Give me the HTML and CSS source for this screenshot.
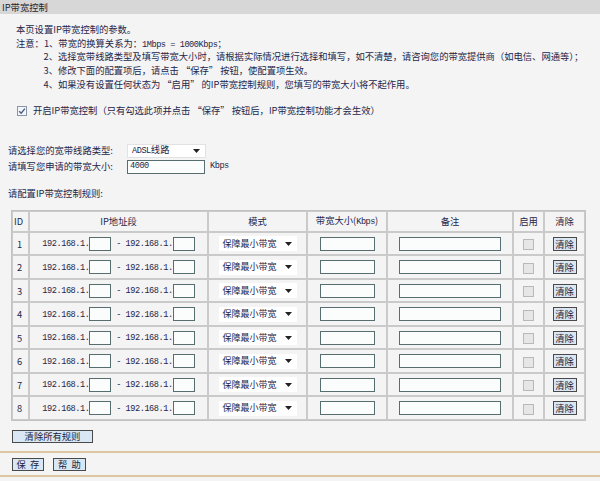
FILE: index.html
```html
<!DOCTYPE html>
<html lang="zh-CN">
<head>
<meta charset="utf-8">
<title>IP带宽控制</title>
<link rel="stylesheet" href="styles.css">
</head>
<body>
<div class="titlebar">IP带宽控制</div>
<div class="notes">
  <p>本页设置IP带宽控制的参数。</p>
  <p>注意：1、带宽的换算关系为：<span class="m">1Mbps = 1000Kbps</span>；</p>
  <p class="ind">2、选择宽带线路类型及填写带宽大小时，请根据实际情况进行选择和填写，如不清楚，请咨询您的带宽提供商（如电信、网通等）；</p>
  <p class="ind">3、修改下面的配置项后，请点击 “保存” 按钮，使配置项生效。</p>
  <p class="ind">4、如果没有设置任何状态为 “启用” 的IP带宽控制规则，您填写的带宽大小将不起作用。</p>
</div>
<div class="enable">
  <span class="cb checked"><svg width="10" height="10" viewBox="0 0 10 10"><path d="M2.2 5.2 L4.2 7.3 L7.9 2.6" fill="none" stroke="#4a5f86" stroke-width="1.4"/></svg></span>
  <span>开启IP带宽控制（只有勾选此项并点击 “保存” 按钮后，IP带宽控制功能才会生效）</span>
</div>
<div class="form">
  <div class="frow">
    <span class="flabel">请选择您的宽带线路类型:</span>
    <span class="sel sel-line"><span><span class="m">ADSL</span>线路</span><svg width="7" height="4" viewBox="0 0 7 4"><path d="M0 0h7L3.5 4z" fill="#222"/></svg></span>
  </div>
  <div class="frow">
    <span class="flabel">请填写您申请的带宽大小:</span>
    <span class="inp inp-bw"><span class="m">4000</span></span>
    <span class="m unit">Kbps</span>
  </div>
</div>
<div class="cfg">请配置IP带宽控制规则:</div>
<table class="rules">
  <colgroup>
    <col class="c-id"><col class="c-ip"><col class="c-mode"><col class="c-bw"><col class="c-note"><col class="c-en"><col class="c-clr">
  </colgroup>
  <thead>
    <tr class="hrow">
      <th class="idh">ID</th><th>IP地址段</th><th>模式</th><th>带宽大小(<span class="m">Kbps</span>)</th><th>备注</th><th>启用</th><th>清除</th>
    </tr>
  </thead>
  <tbody>
    <tr><td class="idc">1</td><td><span class="m">192.168.1.</span><span class="inp ipb"></span><span class="m"> - 192.168.1.</span><span class="inp ipb"></span></td><td><span class="sel sel-mode"><span>保障最小带宽</span><svg width="7" height="4" viewBox="0 0 7 4"><path d="M0 0h7L3.5 4z" fill="#222"/></svg></span></td><td><span class="inp bwb"></span></td><td><span class="inp noteb"></span></td><td><span class="cb dis"></span></td><td><span class="btn btn-clr">清除</span></td></tr>
    <tr><td class="idc">2</td><td><span class="m">192.168.1.</span><span class="inp ipb"></span><span class="m"> - 192.168.1.</span><span class="inp ipb"></span></td><td><span class="sel sel-mode"><span>保障最小带宽</span><svg width="7" height="4" viewBox="0 0 7 4"><path d="M0 0h7L3.5 4z" fill="#222"/></svg></span></td><td><span class="inp bwb"></span></td><td><span class="inp noteb"></span></td><td><span class="cb dis"></span></td><td><span class="btn btn-clr">清除</span></td></tr>
    <tr><td class="idc">3</td><td><span class="m">192.168.1.</span><span class="inp ipb"></span><span class="m"> - 192.168.1.</span><span class="inp ipb"></span></td><td><span class="sel sel-mode"><span>保障最小带宽</span><svg width="7" height="4" viewBox="0 0 7 4"><path d="M0 0h7L3.5 4z" fill="#222"/></svg></span></td><td><span class="inp bwb"></span></td><td><span class="inp noteb"></span></td><td><span class="cb dis"></span></td><td><span class="btn btn-clr">清除</span></td></tr>
    <tr><td class="idc">4</td><td><span class="m">192.168.1.</span><span class="inp ipb"></span><span class="m"> - 192.168.1.</span><span class="inp ipb"></span></td><td><span class="sel sel-mode"><span>保障最小带宽</span><svg width="7" height="4" viewBox="0 0 7 4"><path d="M0 0h7L3.5 4z" fill="#222"/></svg></span></td><td><span class="inp bwb"></span></td><td><span class="inp noteb"></span></td><td><span class="cb dis"></span></td><td><span class="btn btn-clr">清除</span></td></tr>
    <tr><td class="idc">5</td><td><span class="m">192.168.1.</span><span class="inp ipb"></span><span class="m"> - 192.168.1.</span><span class="inp ipb"></span></td><td><span class="sel sel-mode"><span>保障最小带宽</span><svg width="7" height="4" viewBox="0 0 7 4"><path d="M0 0h7L3.5 4z" fill="#222"/></svg></span></td><td><span class="inp bwb"></span></td><td><span class="inp noteb"></span></td><td><span class="cb dis"></span></td><td><span class="btn btn-clr">清除</span></td></tr>
    <tr><td class="idc">6</td><td><span class="m">192.168.1.</span><span class="inp ipb"></span><span class="m"> - 192.168.1.</span><span class="inp ipb"></span></td><td><span class="sel sel-mode"><span>保障最小带宽</span><svg width="7" height="4" viewBox="0 0 7 4"><path d="M0 0h7L3.5 4z" fill="#222"/></svg></span></td><td><span class="inp bwb"></span></td><td><span class="inp noteb"></span></td><td><span class="cb dis"></span></td><td><span class="btn btn-clr">清除</span></td></tr>
    <tr><td class="idc">7</td><td><span class="m">192.168.1.</span><span class="inp ipb"></span><span class="m"> - 192.168.1.</span><span class="inp ipb"></span></td><td><span class="sel sel-mode"><span>保障最小带宽</span><svg width="7" height="4" viewBox="0 0 7 4"><path d="M0 0h7L3.5 4z" fill="#222"/></svg></span></td><td><span class="inp bwb"></span></td><td><span class="inp noteb"></span></td><td><span class="cb dis"></span></td><td><span class="btn btn-clr">清除</span></td></tr>
    <tr><td class="idc">8</td><td><span class="m">192.168.1.</span><span class="inp ipb"></span><span class="m"> - 192.168.1.</span><span class="inp ipb"></span></td><td><span class="sel sel-mode"><span>保障最小带宽</span><svg width="7" height="4" viewBox="0 0 7 4"><path d="M0 0h7L3.5 4z" fill="#222"/></svg></span></td><td><span class="inp bwb"></span></td><td><span class="inp noteb"></span></td><td><span class="cb dis"></span></td><td><span class="btn btn-clr">清除</span></td></tr>
  </tbody>
</table>
<div class="clearall"><span class="btn btn-all">清除所有规则</span></div>
<div class="bar">
  <span class="btn btn-save">保  存</span>
  <span class="btn btn-help">帮  助</span>
</div>
</body>
</html>
```

FILE: styles.css
```css
html, body {
  margin: 0;
  background: #f4f4f4;
}
body {
  width: 600px;
  height: 481px;
  overflow: hidden;
  font-family: "Noto Sans CJK SC", "Noto Sans", sans-serif;
  font-size: 9.3px;
  line-height: 13.7px;
  color: #25264a;
}
.m {
  font-family: "Liberation Mono", monospace;
  font-size: 8.6px;
  letter-spacing: -0.45px;
  white-space: pre;
}
.titlebar {
  height: 14px;
  line-height: 14px;
  background: #d7d7d7;
  padding-left: 2px;
  color: #1f1f33;
}
.notes {
  padding: 9px 0 0 16px;
}
.notes p {
  margin: 0;
  height: 13.7px;
  white-space: pre;
}
.notes .ind {
  padding-left: 27.5px;
}
.enable {
  display: flex;
  align-items: center;
  gap: 6px;
  height: 14px;
  margin: 12.5px 0 0 17px;
  white-space: pre;
}
.cb {
  display: inline-flex;
  box-sizing: border-box;
  width: 10px;
  height: 10px;
  vertical-align: middle;
}
.cb.checked {
  border: 1px solid #8896a8;
  background: #f2f5f9;
  align-items: center;
  justify-content: center;
}
.cb.checked svg {
  margin: -1px;
}
.cb.dis {
  width: 11px;
  height: 11px;
  border: 1px solid #b9b9b9;
  background: #e6e6e6;
}
.form {
  margin-top: 25px;
  padding-left: 8px;
}
.frow {
  display: flex;
  align-items: center;
  height: 16px;
}
.flabel {
  width: 119px;
  white-space: nowrap;
}
.sel {
  display: inline-flex;
  align-items: center;
  justify-content: space-between;
  box-sizing: border-box;
  background: #fff;
  vertical-align: middle;
  white-space: nowrap;
}
.sel-line {
  width: 79px;
  height: 14px;
  padding: 0 5px 0 4px;
  border: 1px solid #e2e2e2;
}
.sel-mode {
  width: 78px;
  height: 15px;
  padding: 0 5px 0 4px;
  font-size: 9px;
}
.inp {
  display: inline-flex;
  align-items: center;
  box-sizing: border-box;
  border: 1px solid #566e70;
  background: #fbfdfd;
  vertical-align: middle;
}
.inp-bw {
  width: 78px;
  height: 14px;
  padding-left: 2px;
}
.unit {
  margin-left: 5px;
}
.cfg {
  margin: 11px 0 0 8px;
  height: 14px;
  line-height: 14px;
}
.rules {
  margin: 10px 0 0 11px;
  width: 575px;
  table-layout: fixed;
  border-spacing: 0;
  border: 1px solid #c2c2c2;
}
.c-id { width: 17px; }
.c-ip { width: 179px; }
.c-mode { width: 99px; }
.c-bw { width: 80px; }
.c-note { width: 126px; }
.c-en { width: 31px; }
.c-clr { width: 41px; }
.rules th,
.rules td {
  border: 1px solid #cacaca;
  padding: 0;
  font-weight: normal;
  text-align: center;
  white-space: nowrap;
  overflow: hidden;
  line-height: 12px;
}
.rules .hrow {
  height: 21px;
}
.rules tbody tr {
  height: 23.5px;
}
.rules .idh {
  text-align: left;
  padding-left: 1px;
}
.rules .idc {
  text-align: left;
  padding-left: 4px;
}
.ipb {
  width: 22px;
  height: 14px;
}
.bwb {
  width: 55px;
  height: 14px;
}
.noteb {
  width: 102px;
  height: 14px;
}
.btn {
  display: inline-flex;
  align-items: center;
  justify-content: center;
  box-sizing: border-box;
  border: 1px solid #4a4a4a;
  background: #d9e7f4;
  color: #1c1c3a;
  white-space: pre;
  vertical-align: middle;
}
.btn-clr {
  width: 24px;
  height: 14px;
}
.clearall {
  margin: 9px 0 0 12px;
  height: 13px;
  display: flex;
}
.btn-all {
  width: 81px;
  height: 13px;
}
.bar {
  margin-top: 8px;
  border-top: 2px solid #dfc6a2;
  border-bottom: 2px solid #dfc6a2;
  padding: 5px 0 4px 12px;
  display: flex;
  gap: 9px;
}
.btn-save {
  width: 32px;
  height: 13px;
}
.btn-help {
  width: 33px;
  height: 13px;
}
```
